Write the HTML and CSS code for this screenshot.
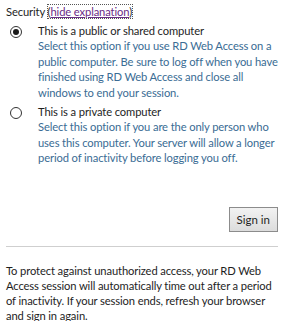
FILE: index.html
```html
<!DOCTYPE html>
<html>
<head>
<meta charset="utf-8">
<link rel="stylesheet" href="styles.css">
</head>
<body>
<div class="page">
  <div class="security">Security <span class="paren">(<a class="link" href="#">hide explanation</a>)</span></div>
  <div class="option">
    <span class="radio checked"></span>
    <div class="opt-text">
      <div class="opt-title">This is a public or shared computer</div>
      <div class="opt-desc">Select this option if you use RD Web Access on a public computer. Be sure to log off when you have finished using RD Web Access and close all windows to end your session.</div>
    </div>
  </div>
  <div class="option second">
    <span class="radio"></span>
    <div class="opt-text">
      <div class="opt-title">This is a private computer</div>
      <div class="opt-desc">Select this option if you are the only person who uses this computer. Your server will allow a longer period of inactivity before logging you off.</div>
    </div>
  </div>
  <div class="actions">
    <button class="signin">Sign in</button>
  </div>
  <hr class="sep">
  <p class="note">To protect against unauthorized access, your RD Web Access session will automatically time out after a period of inactivity. If your session ends, refresh your browser and sign in again.</p>
</div>
</body>
</html>
```
FILE: styles.css
```css
html, body {
  margin: 0;
  padding: 0;
  background: #fff;
}
.page {
  font-family: Lato, "Open Sans", sans-serif;
  font-size: 11.2px;
  letter-spacing: -0.12px;
  line-height: 15.4px;
  color: #1e1e1e;
  padding: 4px 3px 0 6px;
}
.security {
  height: 17px;
}
.paren {
  outline: 1px dotted #555;
  outline-offset: 0;
}
.link {
  color: #6a2c86;
  text-decoration: underline;
}
.option {
  display: flex;
  margin-top: 2px;
}
.option.second {
  margin-top: 4px;
}
.radio {
  flex: none;
  width: 10px;
  height: 10px;
  border: 1px solid #333;
  border-radius: 50%;
  margin: 3px 17px 0 4px;
  box-sizing: content-box;
  position: relative;
  background: #fff;
}
.radio.checked::after {
  content: "";
  position: absolute;
  left: 2px;
  top: 2px;
  width: 6px;
  height: 6px;
  border-radius: 50%;
  background: #1a1a1a;
}
.opt-text {
  margin-left: -1px;
}
.opt-desc {
  color: #3a6c94;
}
.actions {
  display: flex;
  justify-content: flex-end;
  margin-top: 41px;
}
.signin {
  font-family: Lato, "Open Sans", sans-serif;
  font-size: 11.5px;
  color: #1e1e1e;
  padding: 0 7px;
  height: 25px;
  border: 1px solid #8c8c8c;
  border-radius: 0;
  background: linear-gradient(#f2f2f2, #dcdcdc);
}
.sep {
  border: 0;
  border-top: 1px solid #cfcfcf;
  margin: 14px 0 0 0;
}
.note {
  margin: 16px 0 0 0;
  line-height: 15px;
}
```
